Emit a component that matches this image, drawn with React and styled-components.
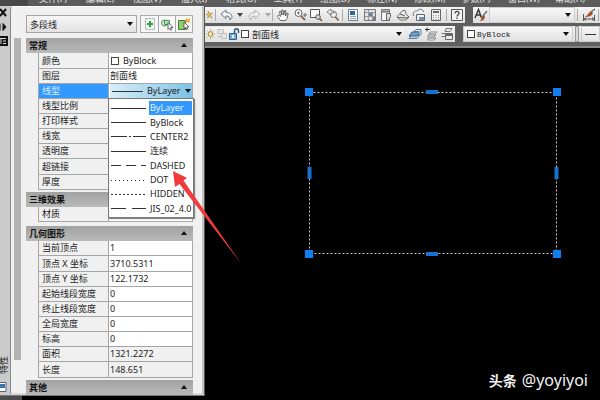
import React from "react";
import styled, { createGlobalStyle } from "styled-components";

const GlobalStyle = createGlobalStyle`
  * {
    box-sizing: border-box;
  }

  body {
    margin: 0;
    background: #000;
    font-family: "Noto Sans", "Noto Sans CJK SC", sans-serif;
    font-size: 9px;
    color: #222;
  }

  button,
  input,
  select {
    font: inherit;
    color: inherit;
    margin: 0;
    padding: 0;
    border: none;
    background: none;
    border-radius: 0;
  }
`;

const Window = styled.div`
  position: relative;
  display: flex;
  flex-direction: column;
  height: 100vh;
  overflow: hidden;
`;

const MenuBar = styled.nav`
  display: flex;
  align-items: flex-end;
  gap: 17px;
  height: 6px;
  flex: none;
  padding-left: 10px;
  overflow: hidden;
  background: #5c5c5c;
  border-left: 28px solid #484848;
`;

const MenuButton = styled.button`
  flex: none;
  width: 30px;
  height: 14px;
  line-height: 14px;
  color: #e4e4e4;
  white-space: nowrap;
`;

const Body = styled.div`
  display: flex;
  flex: 1;
  min-height: 0;
`;

const Side = styled.div`
  display: flex;
  flex-direction: column;
  flex: 0 0 205px;
`;

const SideFoot = styled.div`
  height: 4px;
  border-left: 22px solid #4c4c4c;
  background: #000;
`;

const Palette = styled.aside`
  display: flex;
  flex: 1;
  min-height: 0;
  background: #cbcbcb;
  border-right: 1px solid #555;
  border-bottom: 1px solid #777;
`;

const Strip = styled.div`
  display: flex;
  flex-direction: column;
  justify-content: space-between;
  width: 10px;
  padding: 0 0 1px;
  overflow: hidden;
`;

const StripGroup = styled.div`
  display: flex;
  flex-direction: column;
  gap: ${(props) => props.$gap}px;

  button {
    display: flex;
  }
`;

const StripTitle = styled.span`
  width: 8px;
  height: 18px;
  line-height: 8px;
  writing-mode: vertical-rl;
  text-orientation: sideways;
  transform: rotate(180deg);
  white-space: nowrap;
`;

const Sheet = styled.div`
  display: flex;
  flex: 1;
  gap: 5px;
  padding: 0 9px 0 3px;
  background: #f0f0f0;
  border: 1px solid #fff;
  border-left-color: #8a8a8a;
  border-right: 2px solid #c4c4c4;
  border-bottom: 2px solid #d8d8d8;
  border-radius: 4px 4px 0 0;
`;

const ScrollTrack = styled.div`
  flex: 0 0 7px;
  padding-top: 31px;
`;

const ScrollThumb = styled.div`
  height: 322px;
  background: #b3b3b3;
`;

const Properties = styled.div`
  flex: 1;
  min-width: 0;
  display: flex;
  flex-direction: column;
`;

const ObjectRow = styled.div`
  display: flex;
  gap: 3px;
  flex: none;
  padding: 8px 0 5px;
`;

const SelectBox = styled.label`
  display: flex;
  align-items: center;
  flex: ${(props) => props.$flex || "1"};
  min-width: 0;
  height: ${(props) => props.$height}px;
  padding: 0 3px 0 ${(props) => (props.$tight ? 0 : 3)}px;
  gap: ${(props) => (props.$tight ? 1 : 2)}px;
  overflow: hidden;
  background: linear-gradient(#f7f7f7, #e2e2e2);
  border: 1px solid ${(props) => props.$border || "#a4a4a4"};
  font-family: ${(props) =>
    props.$mono ? '"Liberation Mono", "Noto Sans CJK SC", monospace' : "inherit"};
  font-size: ${(props) => (props.$mono ? 8 : 9)}px;

  select {
    appearance: none;
    flex: 1;
    min-width: 0;
    padding-left: ${(props) => (props.$tight ? 2 : 0)}px;
    outline: none;
  }
`;

const ToolGroup = styled.div`
  display: flex;
  border: 1px solid #aaa;
  background: #f7f7f7;

  button {
    display: flex;
    align-items: center;
    justify-content: center;
    width: 17px;
    height: 16px;
  }

  button + button {
    border-left: 1px solid #aaa;
  }
`;

const Section = styled.section`
  flex: none;
  margin-bottom: ${(props) => props.$after || 0}px;
`;

const SectionHead = styled.button`
  display: flex;
  align-items: center;
  justify-content: space-between;
  width: 100%;
  height: 15px;
  padding: 0 6px 1px 3px;
  font-weight: bold;
  color: #111;
  background: linear-gradient(#a2a2a2, #b9b9b9);
`;

const Table = styled.table`
  width: calc(100% - 12px);
  margin-left: 12px;
  table-layout: fixed;
  border-collapse: separate;
  border-spacing: 0;
  border-left: 1px solid #a6a6a6;
  border-right: 1px solid #a6a6a6;
`;

const Row = styled.tr`
  height: ${(props) => (props.$tall ? 16 : 15)}px;

  th,
  td {
    padding: 0 0 0 3px;
    height: inherit;
    line-height: 14px;
    border-bottom: 1px solid #a6a6a6;
    white-space: nowrap;
  }

  th {
    width: 69px;
    text-align: left;
    font-weight: normal;
    color: ${(props) => (props.$active ? "#d9ecff" : "#222")};
    background: ${(props) => (props.$active ? "#3399ff" : "#f0f0f0")};
  }

  td {
    position: relative;
    padding-left: 1px;
    border-left: 1px solid #a6a6a6;
    background: ${(props) => (props.$locked ? "#f0f0f0" : "#fff")};
  }

  input {
    display: block;
    width: 100%;
    height: 14px;
    line-height: 14px;
    outline: none;
  }
`;

const ColorValue = styled.div`
  display: flex;
  align-items: center;
  gap: 4px;
  padding-left: 1px;
`;

const Swatch = styled.span`
  flex: none;
  width: 8px;
  height: 8px;
  background: #fff;
  border: 1px solid #444;
`;

const LinetypeButton = styled.button`
  display: flex;
  align-items: center;
  width: 100%;
  height: 14px;
  gap: 4px;
  padding: 0 1px 0 2px;
  background: linear-gradient(100deg, #d8eef9, #7cc2e6);

  span {
    flex: 1;
    text-align: left;
  }
`;

const Menu = styled.ul`
  position: absolute;
  z-index: 2;
  top: 14px;
  left: -1px;
  right: -2px;
  display: grid;
  grid-auto-rows: 1fr;
  height: 120px;
  margin: 0;
  padding: 2px 1px 1px 2px;
  list-style: none;
  background: #fff;
  border: 1px solid #777;
  box-shadow: 1px 1px 1px #888;
`;

const Option = styled.li`
  display: flex;
  align-items: center;
  gap: 3px;
  min-width: 0;
  min-height: 0;

  svg {
    flex: none;
  }

  span {
    flex: 1;
    padding-left: 1px;
    line-height: 14px;
    color: ${(props) => (props.$active ? "#e5f2ff" : "#222")};
    background: ${(props) => (props.$active ? "#3399ff" : "none")};
  }
`;

const Main = styled.main`
  display: flex;
  flex-direction: column;
  flex: 1;
  min-width: 0;
  background: #5e5e5e;
`;

const ToolbarRow = styled.div`
  display: flex;
  flex: none;
  gap: 8px;
  padding-top: ${(props) => props.$top}px;
`;

const Toolbar = styled.div`
  display: flex;
  align-items: center;
  flex: ${(props) => props.$flex};
  min-width: 0;
  height: 16px;
  background: linear-gradient(#f4f4f4, #dedede);
`;

const ToolButton = styled.button`
  display: flex;
  align-items: center;
  justify-content: center;
  flex: none;
  width: ${(props) => props.$width || 17}px;
  height: 16px;
  overflow: hidden;
`;

const Divider = styled.span`
  flex: none;
  width: 1px;
  height: 12px;
  margin: 0 ${(props) => props.$space || 1}px;
  background: #aaa;
`;

const Grip = styled.span`
  flex: none;
  width: 4px;
  height: 16px;
  margin: 0 2px;
  background: #d8d8d8;
  border: 1px solid #999;
`;

const ToolbarEdge = styled.div`
  flex: none;
  height: 6px;
  background: #606060;
  border-bottom: 2px solid #868686;
`;

const Canvas = styled.div`
  position: relative;
  flex: 1;
  background: #000;
  overflow: hidden;
`;

const Drawing = styled.svg`
  position: absolute;
  left: 99px;
  top: 39px;
`;

const Signature = styled.div`
  position: absolute;
  right: 12px;
  bottom: 10px;
  display: flex;
  align-items: center;
  gap: 5px;
  color: #f2f2f2;
  font-size: 16px;
  line-height: 20px;

  b {
    font-family: "Noto Sans CJK SC", sans-serif;
    font-size: 14px;
  }
`;

const Pointer = styled.svg`
  position: absolute;
  z-index: 3;
  left: 170px;
  top: 168px;
  pointer-events: none;
`;

const menus = [
  "文件(F)", "编辑(E)", "视图(V)", "插入(I)", "格式(O)", "工具(T)",
  "绘图(D)", "标注(N)", "修改(M)", "参数(P)", "窗口(W)", "帮助(H)",
];

const linetypes = [
  { name: "ByLayer" },
  { name: "ByBlock" },
  { name: "CENTER2", dash: "16 2 2 2" },
  { name: "连续" },
  { name: "DASHED", dash: "10 5" },
  { name: "DOT", dash: "1 3" },
  { name: "HIDDEN", dash: "2 2" },
  { name: "JIS_02_4.0", dash: "15 6" },
];

const general = [
  { label: "颜色", type: "color", value: "ByBlock", tall: true },
  { label: "图层", value: "剖面线" },
  { label: "线型", type: "linetype", value: "ByLayer" },
  { label: "线型比例", value: "" },
  { label: "打印样式", value: "" },
  { label: "线宽", value: "" },
  { label: "透明度", value: "" },
  { label: "超链接", value: "", tall: true },
  { label: "厚度", value: "" },
];

const effects = [{ label: "材质", value: "ByLayer" }];

const geometry = [
  { label: "当前顶点", value: "1" },
  { label: "顶点 X 坐标", value: "3710.5311", tall: true },
  { label: "顶点 Y 坐标", value: "122.1732" },
  { label: "起始线段宽度", value: "0" },
  { label: "终止线段宽度", value: "0" },
  { label: "全局宽度", value: "0" },
  { label: "标高", value: "0" },
  { label: "面积", value: "1321.2272", locked: true },
  { label: "长度", value: "148.651", locked: true, tall: true },
];

const icons = {
  sun: (
    <>
      <circle cx="4.5" cy="7" r="2.4" fill="#fbe9ae" stroke="#a08642" />
      <path d="M4.5 2v1.5M4.5 10.500v1.5M0 7h1M8 7h1M1 3.500l1 1M7 9.500l1 1M8 3.500l-1 1M1 10.500l1-1" stroke="#b39345" />
    </>
  ),
  spark: (
    <path d="M5 1l2 4 5-1-4 3 3 5-4-3-3 3 1-4-3-2 3-1z" fill="#f0b94c" stroke="#8d6a22" strokeWidth=".7" />
  ),
  undo: (
    <path d="M1 6l5-4v2.5c4 0 6 2 6 5L10 12c0-3-1-4-4-4v2.5z" fill="#f3f5f7" stroke="#6b747e" />
  ),
  redo: (
    <path d="M13 6L8 2v2.5c-4 0-6 2-6 5L4 12c0-3 1-4 4-4v2.5z" fill="#eee" stroke="#b0b0b0" />
  ),
  hand: (
    <path d="M4.5 12.5L1.5 8.5 2.5 7l2 1.5-1-5 1.2-.3L6 7l-.2-5H7l.7 5 1-4.5 1.2.2L9.5 8l1.5-3 1.2.4-1.2 5-1.5 2.1z" fill="#fff" stroke="#555" strokeWidth=".9" />
  ),
  zoom: (
    <>
      <circle cx="5.5" cy="5" r="3.5" fill="#f9f9f9" stroke="#666" />
      <path d="M8 8l4 4" stroke="#8a6a4c" strokeWidth="2" />
      <path d="M4 5h3M5.5 3.5v3M10 7h4M12 5v4" stroke="#555" strokeWidth=".8" />
    </>
  ),
  zoomWindow: (
    <>
      <path d="M1.5 1.5h9v8h-9z" fill="#fafafa" stroke="#555" />
      <circle cx="9" cy="9" r="2.3" fill="#ddd" stroke="#555" />
      <path d="M10.5 10.5l2.5 2.5" stroke="#805a38" strokeWidth="1.7" />
    </>
  ),
  zoomBack: (
    <>
      <circle cx="7.500" cy="6.5" r="3" fill="#f5f5f5" stroke="#666" />
      <path d="M9.5 9l3 3.5" stroke="#8a6a4c" strokeWidth="1.7" />
      <path d="M5 1L1 4l4 3V5h3V3H5z" fill="#eee" stroke="#666" strokeWidth=".8" />
    </>
  ),
  properties: (
    <>
      <path d="M2.5 1.5h9v11h-9z" fill="#f8f8f8" stroke="#6f7f90" />
      <path d="M4 3h5v4H4z" fill="#2f66a8" />
      <path d="M4 8.5h6M4 10.5h6" stroke="#9aa6b2" />
    </>
  ),
  center: (
    <>
      <path d="M1.5 1.5h11v11h-11z" fill="#e2e2e2" stroke="#777" />
      <path d="M5.5 2v10M2 4.5h10M2 8.5h3M9.5 5v7M6 8.5h6" stroke="#999" />
      <path d="M6 5h3v3H6zM10 9h2v3h-2z" fill="#69839d" />
    </>
  ),
  palettes: (
    <>
      <path d="M2.5 1.5h8v11h-8z" fill="#f3f3f3" stroke="#777" />
      <path d="M3 3.5h7" stroke="#777" strokeWidth="2" />
      <path d="M7.5 5.5h4v3l-2 4h-2z" fill="#ddd" stroke="#666" />
    </>
  ),
  sheets: (
    <>
      <path d="M1 9l5-6 3-1 1 4 3 3-3 3H4z" fill="#e9e9e9" stroke="#777" />
      <path d="M2 9.500l8 .5 3-1M4 6l5 2" stroke="#555" />
    </>
  ),
  markup: (
    <>
      <path d="M1.5 8c-1-3 1-6 4-5 1-3 6-2 6 1" fill="none" stroke="#777" />
      <path d="M4.5 6.500h8v6h-8z" fill="#eef2f5" stroke="#667" />
      <path d="M7 9h5v3H7z" fill="#6f92b2" />
    </>
  ),
  calc: (
    <>
      <path d="M2.5 1.5h9v11h-9z" fill="#eee" stroke="#666" />
      <path d="M4 4h6" stroke="#666" strokeWidth="2" />
      <path d="M4 7.5h6M4 9.5h6M4 11.5h6" stroke="#999" strokeDasharray="1 1.5" />
    </>
  ),
  help: (
    <>
      <path d="M1.5 1.5h11v11h-11z" fill="#f4f4f4" stroke="#555" />
      <path d="M5 5.500c0-3 4-2.500 4-.3C9 7 7 7 7 8.500M7 9.500v1.500" fill="none" stroke="#444" strokeWidth="1.3" />
    </>
  ),
  freeze: (
    <>
      <path d="M1.5 2.500h6v4h-6zM5.500 6.500h5v5h-5z" fill="#e4e4e4" stroke="#c2c2c2" />
      <path d="M3 8v3M1.5 9.500h3" stroke="#c2c2c2" />
    </>
  ),
  lock: (
    <>
      <path d="M6.5 6V4c0-3 4-3 4 0v2" fill="none" stroke="#31597c" strokeWidth="1.5" />
      <path d="M1.5 6.500h7v6h-7z" fill="#76aed8" stroke="#2d5f8d" />
      <path d="M5 8v3" stroke="#fff" strokeWidth="1.5" />
    </>
  ),
  layers: (
    <>
      <path d="M1 11.500l3-4h8l-3 4z" fill="#b9d3e6" stroke="#5f7d95" />
      <path d="M1 9l3-4h8l-3 4z" fill="#6ea4cb" stroke="#3f6788" />
      <path d="M6 4.500l2-2h5v5l-2 1.500v-4.500z" fill="#e4eef6" stroke="#5c7a92" />
    </>
  ),
  layerPrev: (
    <>
      <path d="M4 8h8l-2 2H4zM4 11h8l-2 2H4zM6 5h7l-2 2H5z" fill="#eee" stroke="#777" strokeWidth=".8" />
      <path d="M1 2.500h5M3 .5v4" stroke="#333" />
    </>
  ),
  layerStates: (
    <>
      <path d="M6 1.500h6l-2 3H5zM1.500 6.500h6M1.500 9.500h4" fill="#eee" stroke="#777" />
      <path d="M5.5 6.500h7v6h-7z" fill="#e6ebf0" stroke="#666" />
      <path d="M6 8h6" stroke="#666" strokeWidth="2" />
    </>
  ),
  textStyle: (
    <>
      <path d="M1 10L4.500 1.500l3 8.500M2.500 7h4" fill="none" stroke="#333" strokeWidth="1.4" />
      <path d="M13 3L9 8" stroke="#777" strokeWidth="1.5" />
      <path d="M9 7l2 1c0 3-2 5-5 5 2-2 1-4 3-6z" fill="#9a5c2f" />
    </>
  ),
  dimStyle: (
    <>
      <path d="M1.5 6v7M12.500 7v6M2 11h10M4 9.500L2 11l2 1.500M10 9.500l2 1.500-2 1.500" fill="none" stroke="#555" />
      <path d="M13 1L9 4" stroke="#666" strokeWidth="1.5" />
      <path d="M9 3l2 2c-1 3-4 4-8 4 3-2 3-4 6-6z" fill="#a4542a" />
    </>
  ),
  addPick: (
    <>
      <path d="M2.500 1.500h9v11h-9z" fill="#eef7ee" stroke="#9aa89a" strokeDasharray="2 1" />
      <path d="M7 4v6M4 7h6" stroke="#31a046" strokeWidth="2" />
    </>
  ),
  pick: (
    <>
      <circle cx="4.5" cy="6" r="3" fill="#d5efd5" stroke="#479457" />
      <path d="M4.500 3.500h5v4h-5z" fill="#b9e0b9" stroke="#479457" />
      <path d="M8 5.500v7l1.5-1.500 1.2 2.300 1-.6-1-2.200H13z" fill="#fff" stroke="#444" strokeWidth=".8" />
    </>
  ),
  quick: (
    <>
      <path d="M1.500 3.500h7v9h-7z" fill="#92cc74" stroke="#3f7d35" />
      <path d="M7 5v7l1.500-1.500 1.200 2.200 1-.6-1-2.100H12z" fill="#fff" stroke="#444" strokeWidth=".8" />
      <path d="M9 1l2 1.500L13.500 1l-1 3 1 2-3-1-2 1z" fill="#f2a936" />
    </>
  ),
  close: <path d="M0 3l6 7M6 3l-6 7" stroke="#111" strokeWidth="2" />,
  autohide: <path d="M0 3.500v7M3 3.500v7L6 7z" fill="#111" stroke="#111" />,
  options: (
    <>
      <path d="M-1 2h9v10h-9z" fill="#111" />
      <path d="M0 4.500h6M3 7h3M3 9.500h3M1 4v6" stroke="#ddd" />
    </>
  ),
  paletteMark: (
    <>
      <path d="M-1 2.500h7v9h-7z" fill="#fff" stroke="#567" />
      <path d="M-1 4h6v4h-6z" fill="#3d75ad" />
    </>
  ),
};

function Icon({ name, width = 14 }) {
  return (
    <svg width={width} height="14" viewBox={`0 0 ${width} 14`} fill="none" aria-hidden="true">
      {icons[name]}
    </svg>
  );
}

const CaretSvg = styled.svg`
  flex: none;
`;

function Caret({ up, color = "#111" }) {
  return (
    <CaretSvg width="6" height="4" viewBox="0 0 6 4" aria-hidden="true">
      <path d={up ? "M0 4L3 0l3 4z" : "M0 0h6L3 4z"} fill={color} />
    </CaretSvg>
  );
}

function LineSample({ dash, width = 35 }) {
  return (
    <svg width={width} height="3" aria-hidden="true">
      <path d={`M0 1.5H${width}`} stroke="#333" strokeDasharray={dash} />
    </svg>
  );
}

function Tool({ icon, label, width }) {
  return (
    <ToolButton $width={width} aria-label={label}>
      <Icon name={icon} />
    </ToolButton>
  );
}

function LinetypeField({ value }) {
  return (
    <>
      <LinetypeButton aria-haspopup="listbox" aria-expanded="true" aria-label="线型">
        <LineSample width={31} />
        <span>{value}</span>
        <Caret />
      </LinetypeButton>
      <Menu role="listbox" aria-label="线型">
        {linetypes.map((type) => (
          <Option
            key={type.name}
            role="option"
            aria-selected={type.name === value}
            $active={type.name === value}
          >
            <LineSample dash={type.dash} />
            <span>{type.name}</span>
          </Option>
        ))}
      </Menu>
    </>
  );
}

function PropertyRow({ label, type, value, locked, tall }) {
  return (
    <Row $tall={tall} $locked={locked} $active={type === "linetype"}>
      <th scope="row">{label}</th>
      <td>
        {type === "linetype" && <LinetypeField value={value} />}
        {type === "color" && (
          <ColorValue>
            <Swatch />
            <input aria-label={label} defaultValue={value} />
          </ColorValue>
        )}
        {!type && <input aria-label={label} defaultValue={value} readOnly={locked} />}
      </td>
    </Row>
  );
}

function PropertySection({ title, rows, after }) {
  return (
    <Section $after={after}>
      <SectionHead aria-expanded="true">
        {title}
        <Caret up />
      </SectionHead>
      {rows && (
        <Table>
          <tbody>
            {rows.map((row) => (
              <PropertyRow key={row.label} {...row} />
            ))}
          </tbody>
        </Table>
      )}
    </Section>
  );
}

function PropertiesPalette() {
  return (
    <Palette>
      <Strip>
        <StripGroup $gap={0}>
          <button aria-label="关闭">
            <Icon name="close" width={10} />
          </button>
          <button aria-label="自动隐藏">
            <Icon name="autohide" width={10} />
          </button>
          <button aria-label="选项">
            <Icon name="options" width={10} />
          </button>
        </StripGroup>
        <StripGroup $gap={6}>
          <StripTitle>特性</StripTitle>
          <Icon name="paletteMark" width={10} />
        </StripGroup>
      </Strip>
      <Sheet>
        <ScrollTrack>
          <ScrollThumb />
        </ScrollTrack>
        <Properties>
          <ObjectRow>
            <SelectBox $height={18}>
              <select aria-label="对象类型">
                <option>多段线</option>
              </select>
              <Caret />
            </SelectBox>
            <ToolGroup>
              <button aria-label="切换选择方式">
                <Icon name="addPick" />
              </button>
              <button aria-label="选择对象">
                <Icon name="pick" />
              </button>
              <button aria-label="快速选择">
                <Icon name="quick" />
              </button>
            </ToolGroup>
          </ObjectRow>
          <PropertySection title="常规" rows={general} after={2} />
          <PropertySection title="三维效果" rows={effects} after={4} />
          <PropertySection title="几何图形" rows={geometry} after={2} />
          <PropertySection title="其他" />
        </Properties>
      </Sheet>
    </Palette>
  );
}

function Toolbars() {
  return (
    <>
      <ToolbarRow $top={1}>
        <Toolbar $flex="0 0 260px">
          <Tool icon="spark" label="特性匹配" width={9} />
          <Divider />
          <Tool icon="undo" label="放弃" width={20} />
          <Caret color="#444" />
          <Tool icon="redo" label="重做" width={22} />
          <Caret color="#aaa" />
          <Divider />
          <Tool icon="hand" label="平移" />
          <Tool icon="zoom" label="实时缩放" />
          <Tool icon="zoomWindow" label="窗口缩放" width={16} />
          <Tool icon="zoomBack" label="缩放上一个" />
          <Divider />
          <Tool icon="properties" label="特性" />
          <Tool icon="center" label="设计中心" />
          <Tool icon="palettes" label="工具选项板" width={16} />
          <Tool icon="sheets" label="图纸集管理器" />
          <Tool icon="markup" label="标记集管理器" width={16} />
          <Tool icon="calc" label="快速计算器" />
          <Divider $space={2} />
          <Tool icon="help" label="帮助" width={16} />
        </Toolbar>
        <Toolbar $flex="1">
          <Tool icon="textStyle" label="文字样式" width={16} />
          <SelectBox $height={16} $flex="0 1 87px" $border="#ccc">
            <select aria-label="文字样式" />
            <Caret />
          </SelectBox>
          <Divider $space={2} />
          <Tool icon="dimStyle" label="标注样式" />
          <Divider />
        </Toolbar>
      </ToolbarRow>
      <ToolbarRow $top={3}>
        <Toolbar $flex="0 0 250px">
          <SelectBox $height={16} $flex="0 1 201px" $border="#e6e6e6" $tight>
            <Icon name="sun" width={9} />
            <Icon name="freeze" width={11} />
            <Icon name="lock" width={12} />
            <Swatch />
            <select aria-label="图层">
              <option>剖面线</option>
            </select>
            <Caret />
          </SelectBox>
          <Tool icon="layers" label="图层特性" />
          <Tool icon="layerPrev" label="上一个图层" width={16} />
          <Tool icon="layerStates" label="图层状态" width={16} />
        </Toolbar>
        <Toolbar $flex="1">
          <SelectBox $height={16} $flex="0 1 110px" $border="#ccc" $mono>
            <Swatch />
            <select aria-label="颜色控制">
              <option>ByBlock</option>
            </select>
            <Caret />
          </SelectBox>
          <Grip />
          <SelectBox $height={16} $border="#ccc">
            <LineSample width={30} />
          </SelectBox>
        </Toolbar>
      </ToolbarRow>
      <ToolbarEdge />
    </>
  );
}

function PolylineDrawing() {
  const corners = [[5, 5], [253, 5], [5, 167], [253, 167]];

  return (
    <Drawing width="258" height="172" role="img" aria-label="多段线">
      <rect x="5.5" y="5.5" width="247" height="161" fill="none" stroke="#c8c8c8" strokeDasharray="2 2" />
      {corners.map(([x, y]) => (
        <rect key={`${x}-${y}`} x={x - 4} y={y - 4} width="8" height="8" fill="#0d7ff2" />
      ))}
      <path d="M122 5h12M122 167h12M5.5 80v12M252.5 80v12" stroke="#1672d0" strokeWidth="4" />
    </Drawing>
  );
}

export default function App() {
  return (
    <Window>
      <GlobalStyle />
      <MenuBar>
        {menus.map((menu) => (
          <MenuButton key={menu}>{menu}</MenuButton>
        ))}
      </MenuBar>
      <Body>
        <Side>
          <PropertiesPalette />
          <SideFoot />
        </Side>
        <Main>
          <Toolbars />
          <Canvas>
            <PolylineDrawing />
            <Signature>
              <b>头条</b>
              <span>@yoyiyoi</span>
            </Signature>
          </Canvas>
        </Main>
      </Body>
      <Pointer width="76" height="100" aria-hidden="true">
        <path d="M3 3l14 7-3.500 2.500L71.500 96 9.500 16 5 19z" fill="#f03a3c" />
      </Pointer>
    </Window>
  );
}
